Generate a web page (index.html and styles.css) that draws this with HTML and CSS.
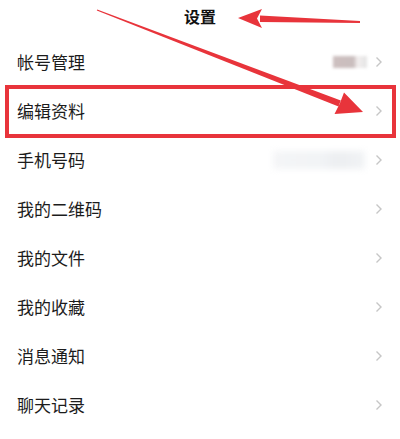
FILE: index.html
```html
<!DOCTYPE html>
<html lang="zh-CN">

<head>
  <meta charset="UTF-8" />
  <meta name="viewport" content="width=device-width, initial-scale=1.0" />
  <title>设置</title>
  <link rel="stylesheet" href="styles.css">
</head>

<body>
  <div class="page">
    <header class="top-bar">
      <h1 class="title">设置</h1>
    </header>

    <ul class="settings-list">
      <li class="row">
        <span class="label">帐号管理</span>
        <span class="value value-account"></span>
        <svg class="chevron" viewBox="0 0 8 12"><path d="M1.5 1.5 L6 6 L1.5 10.5" /></svg>
      </li>
      <li class="row">
        <span class="label">编辑资料</span>
        <svg class="chevron" viewBox="0 0 8 12"><path d="M1.5 1.5 L6 6 L1.5 10.5" /></svg>
      </li>
      <li class="row">
        <span class="label">手机号码</span>
        <span class="value value-phone"></span>
        <svg class="chevron" viewBox="0 0 8 12"><path d="M1.5 1.5 L6 6 L1.5 10.5" /></svg>
      </li>
      <li class="row">
        <span class="label">我的二维码</span>
        <svg class="chevron" viewBox="0 0 8 12"><path d="M1.5 1.5 L6 6 L1.5 10.5" /></svg>
      </li>
      <li class="row">
        <span class="label">我的文件</span>
        <svg class="chevron" viewBox="0 0 8 12"><path d="M1.5 1.5 L6 6 L1.5 10.5" /></svg>
      </li>
      <li class="row">
        <span class="label">我的收藏</span>
        <svg class="chevron" viewBox="0 0 8 12"><path d="M1.5 1.5 L6 6 L1.5 10.5" /></svg>
      </li>
      <li class="row">
        <span class="label">消息通知</span>
        <svg class="chevron" viewBox="0 0 8 12"><path d="M1.5 1.5 L6 6 L1.5 10.5" /></svg>
      </li>
      <li class="row">
        <span class="label">聊天记录</span>
        <svg class="chevron" viewBox="0 0 8 12"><path d="M1.5 1.5 L6 6 L1.5 10.5" /></svg>
      </li>
    </ul>

    <!-- annotation layer: highlight box + arrows -->
    <svg class="annotations" viewBox="0 0 400 439">
      <rect x="7" y="87" width="387" height="49" fill="none" stroke="#e8343b" stroke-width="4" />
      <polygon points="260,22 360,23 360,21 260,15.5" fill="#e8343b" />
      <polygon points="238,18 262,9 257,18.5 262,28" fill="#e8343b" />
      <polygon points="96.8,10.5 338.5,106.5 340.8,100.5 97.2,9.5" fill="#e8343b" />
      <polygon points="363,112 344,92.5 340,103 334.5,114" fill="#e8343b" />
    </svg>
  </div>
</body>

</html>
```

FILE: styles.css
```css
body {
  margin: 0;
  background: #fff;
  font-family: "Noto Sans CJK SC", "Noto Sans", sans-serif;
  color: #1c1c1c;
}

.page {
  position: relative;
  width: 400px;
  height: 439px;
  overflow: hidden;
}

.top-bar {
  height: 37px;
  display: flex;
  justify-content: center;
}

.title {
  margin: 0;
  padding-top: 4px;
  font-size: 16px;
  line-height: 24px;
  font-weight: bold;
  color: #111;
}

.settings-list {
  list-style: none;
  margin: 0;
  padding: 0;
}

.row {
  height: 49px;
  display: flex;
  align-items: center;
  padding: 0 17px 0 17px;
}

.label {
  flex: 1;
  font-size: 17px;
  line-height: 24px;
}

.value {
  display: block;
  margin-right: 8px;
}

.value-account {
  width: 34px;
  height: 12px;
  filter: blur(1.5px);
  background: linear-gradient(to right, #cdbfbf 0%, #c9bdbd 60%, #f2eeee 72%, #e4e4e4 100%);
}

.value-phone {
  width: 92px;
  height: 18px;
  margin-right: 10px;
  filter: blur(3px);
  background: linear-gradient(to right, #f4f5f7 0%, #f2f4f6 50%, #eceef1 70%, #f1f3f5 100%);
}

.chevron {
  width: 8px;
  height: 12px;
  fill: none;
  stroke: #c6c6c6;
  stroke-width: 1.4;
}

.annotations {
  position: absolute;
  left: 0;
  top: 0;
  width: 400px;
  height: 439px;
  pointer-events: none;
}
```
